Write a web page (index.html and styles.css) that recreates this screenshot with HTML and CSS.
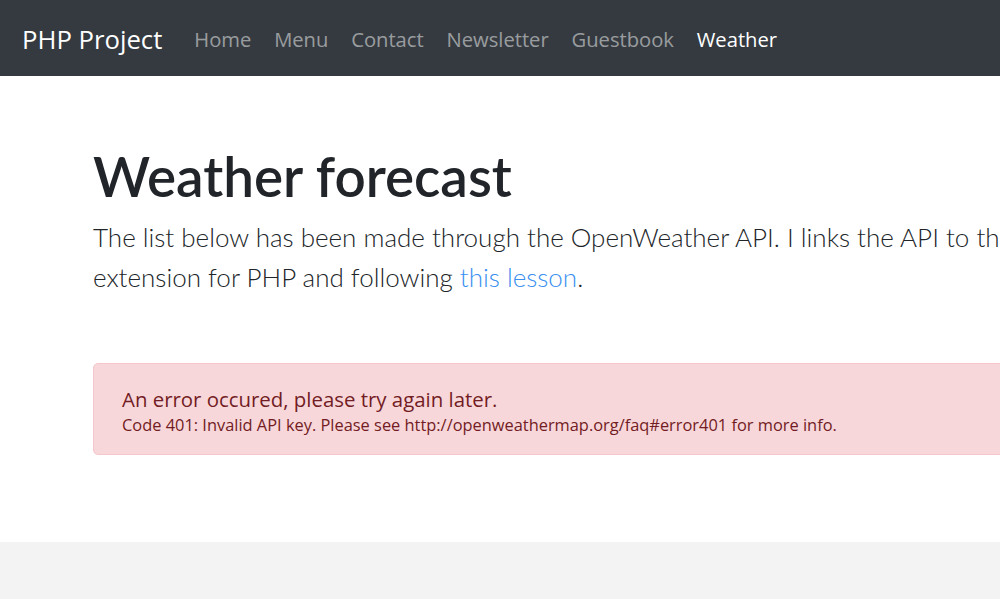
FILE: index.html
```html
<!DOCTYPE html>
<html lang="en">
<head>
<meta charset="utf-8">
<title>Weather - PHP Project</title>
<link rel="stylesheet" href="styles.css">
</head>
<body>
<nav class="navbar">
  <a class="brand" href="#">PHP Project</a>
  <ul class="nav">
    <li><a class="nav-link" href="#">Home</a></li>
    <li><a class="nav-link" href="#">Menu</a></li>
    <li><a class="nav-link" href="#">Contact</a></li>
    <li><a class="nav-link" href="#">Newsletter</a></li>
    <li><a class="nav-link" href="#">Guestbook</a></li>
    <li><a class="nav-link active" href="#">Weather</a></li>
  </ul>
</nav>
<main class="main">
  <div class="container">
    <h1 class="title">Weather forecast</h1>
    <p class="lead">The list below has been made through the OpenWeather API. I links the API to the website with the cURL<br>extension for PHP and following <a class="link" href="#">this lesson</a>.</p>
    <div class="alert">
      <p class="alert-title">An error occured, please try again later.</p>
      <p class="alert-detail">Code 401: Invalid API key. Please see http://openweathermap.org/faq#error401 for more info.</p>
    </div>
  </div>
</main>
<footer class="footer"></footer>
</body>
</html>
```
FILE: styles.css
```css
html, body {
  margin: 0;
  padding: 0;
}
body {
  font-family: "Open Sans", "Noto Sans", sans-serif;
  color: #212529;
  background: #fff;
  overflow: hidden;
  width: 1000px;
  height: 599px;
}
.navbar {
  height: 76px;
  background: #343a40;
  display: flex;
  align-items: center;
  padding: 2px 22px 0;
  box-sizing: border-box;
}
.brand {
  color: #fff;
  text-decoration: none;
  font-size: 25.7px;
  margin-right: 20.6px;
  white-space: nowrap;
}
.nav {
  list-style: none;
  margin: 0;
  padding: 0;
  display: flex;
}
.nav-link {
  display: block;
  padding: 0 11.4px;
  font-size: 20.2px;
  color: rgba(255, 255, 255, 0.5);
  text-decoration: none;
  white-space: nowrap;
}
.nav-link.active {
  color: #fff;
}
.main {
  height: 466px;
}
.container {
  padding: 68px 0 0 93px;
  width: 1300px;
}
.title {
  margin: 0;
  font-family: "Lato", "Open Sans", sans-serif;
  font-size: 54.8px;
  font-weight: 600;
  line-height: 65px;
}
.lead {
  margin: 8px 0 0;
  font-family: "Lato", "Open Sans", sans-serif;
  font-size: 26px;
  font-weight: 300;
  line-height: 40px;
  white-space: nowrap;
}
.link {
  color: #3a8ff0;
  text-decoration: none;
}
.alert {
  margin-top: 66px;
  height: 92px;
  box-sizing: border-box;
  background: #f8d7da;
  border: 1px solid #f5c6cb;
  border-radius: 5px;
  color: #721c24;
  padding: 21px 28px;
}
.alert-title {
  margin: 0;
  font-size: 20.4px;
  line-height: 28px;
}
.alert-detail {
  margin: 0;
  font-size: 16.4px;
  line-height: 24px;
}
.footer {
  height: 100px;
  background: #f3f3f3;
}
```
